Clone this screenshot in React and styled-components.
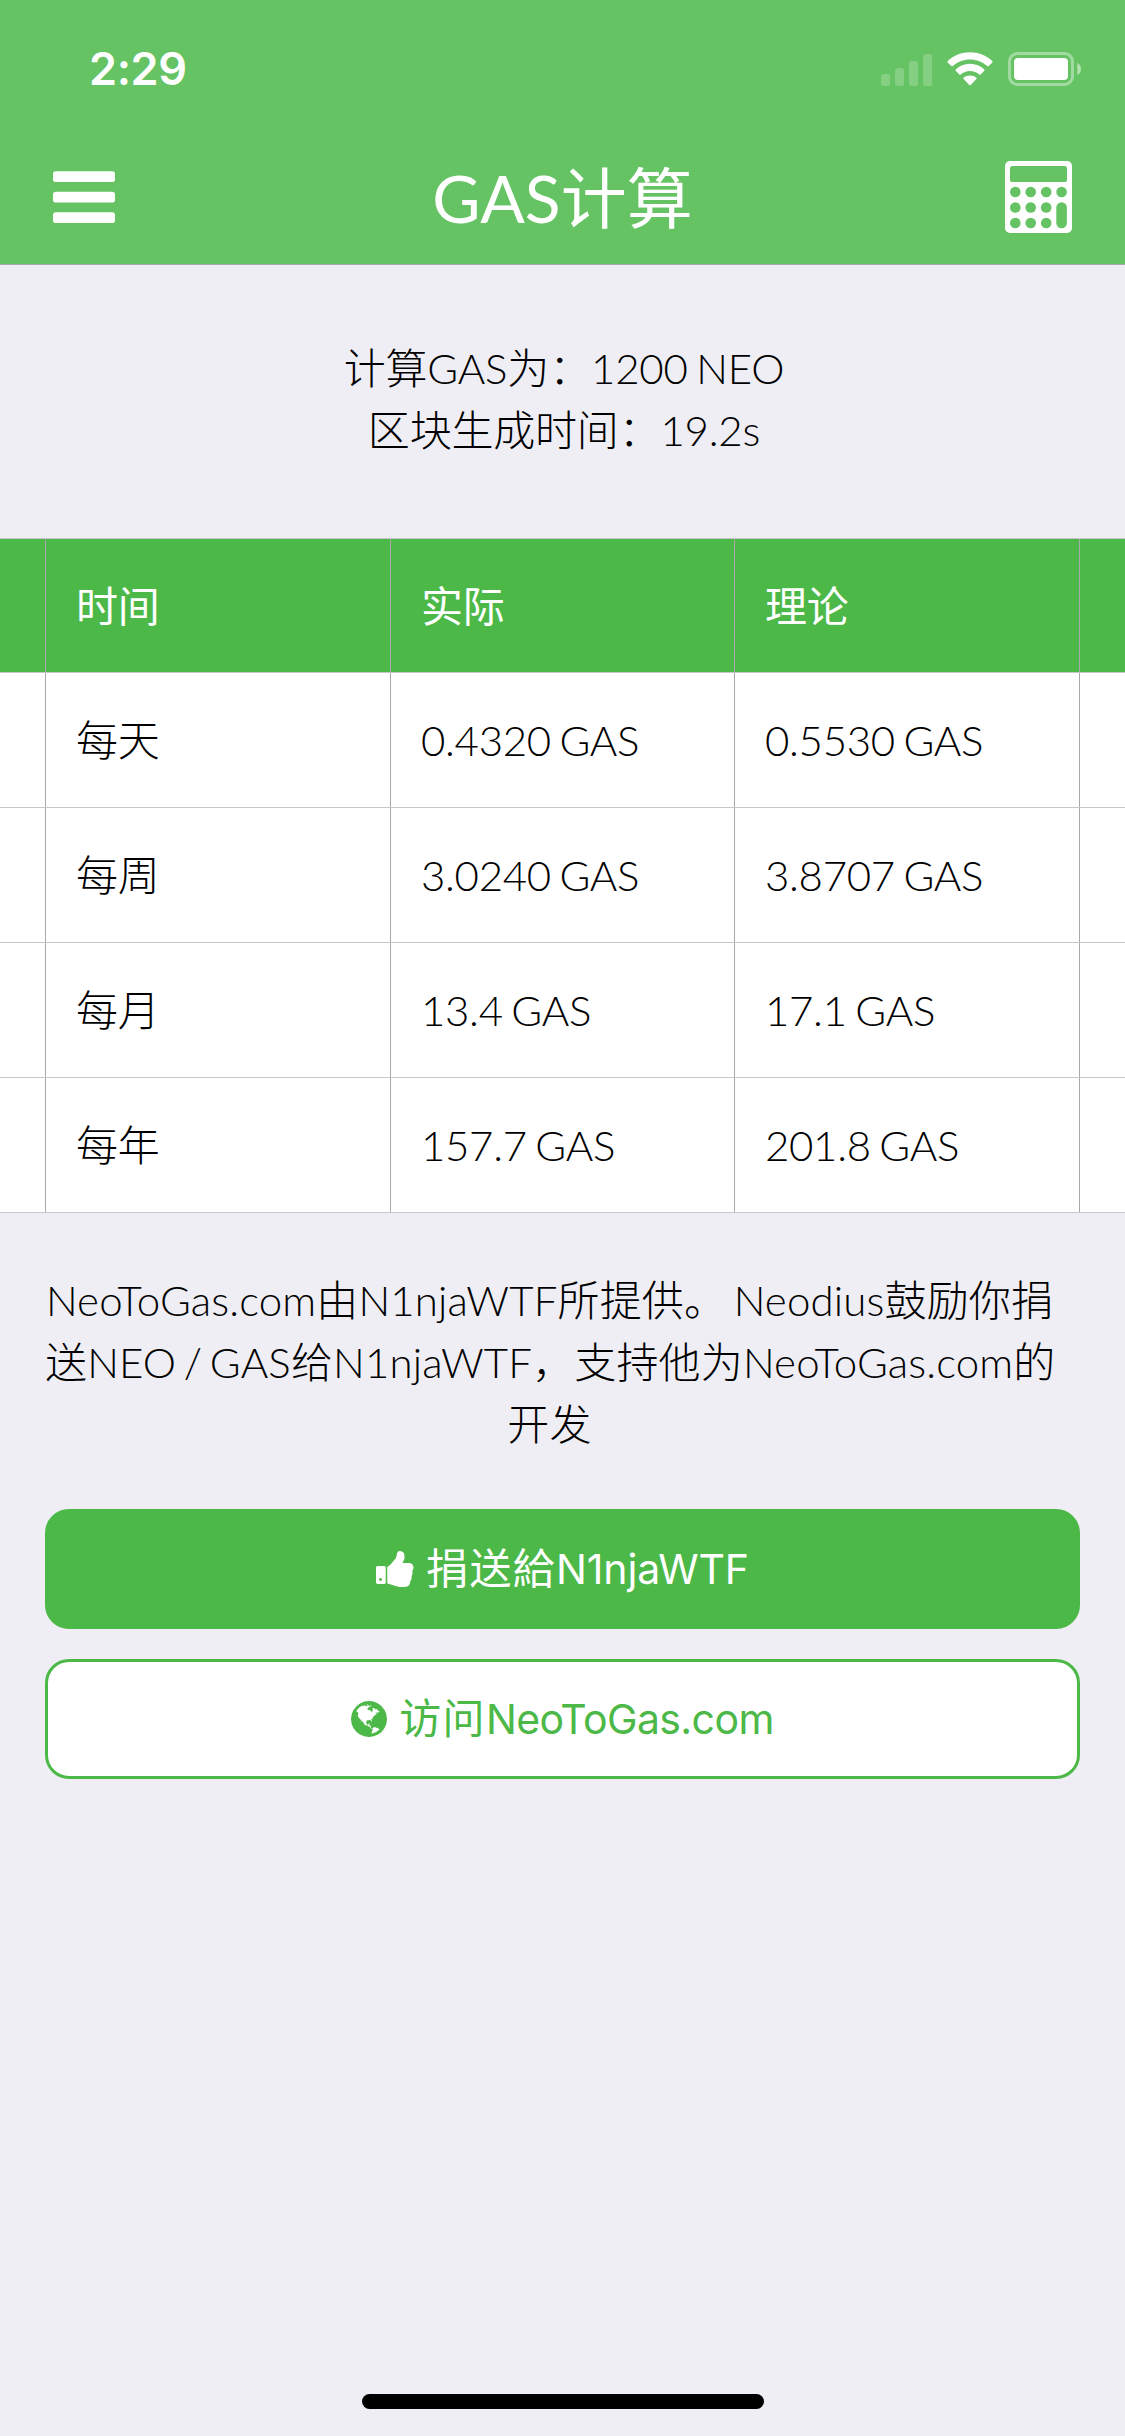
import React from "react";
import styled, { createGlobalStyle } from "styled-components";

const GREEN = "#4bb847";

const GlobalStyle = createGlobalStyle`
  *, *::before, *::after { box-sizing: border-box; }
  body { margin: 0; background: #efeef4; }
`;

const Screen = styled.div`
  display: flex;
  flex-direction: column;
  width: 1125px;
  height: 2436px;
  overflow: hidden;
  background: #efeef4;
  color: #000;
  font-family: Lato, "Noto Sans CJK SC", sans-serif;
  font-size: 42px;
  font-weight: 300;
  line-height: 62px;
`;

const Header = styled.header`
  display: flex;
  flex-direction: column;
  height: 265px;
  flex: none;
  background: #65c363;
  border-bottom: 1px solid #a7a7aa;
  color: #fff;
`;

const StatusBar = styled.div`
  display: flex;
  align-items: center;
  justify-content: space-between;
  height: 132px;
  padding: 6px 44px 0 89px;
`;

const Clock = styled.span`
  font-family: Inter, sans-serif;
  font-size: 45px;
  font-weight: 600;
  line-height: 60px;
  letter-spacing: -0.4px;
`;

const StatusIcons = styled.div`
  display: flex;
  align-items: center;
  gap: 15px;
`;

const NavBar = styled.div`
  display: grid;
  grid-template-columns: 160px 1fr 160px;
  align-items: center;
  height: 130px;
  padding: 0 53px;
`;

const NavTitle = styled.h1`
  margin: 0;
  padding-top: 2px;
  text-align: center;
  font-size: 66px;
  font-weight: 400;
  line-height: 80px;
`;

const NavAction = styled.div`
  display: flex;
  justify-content: ${(p) => (p.$end ? "flex-end" : "flex-start")};
`;

const Summary = styled.section`
  height: 273px;
  flex: none;
  padding: 72px 0 0 3px;
  text-align: center;
  letter-spacing: -0.2px;
  word-spacing: -2.5px;
`;

const Line = styled.div`
  white-space: nowrap;
`;

const Table = styled.section`
  flex: none;
  border-top: 1px solid #c8c7cc;
`;

const Row = styled.div`
  display: grid;
  grid-template-columns: 45px 345px 344px 345px 1fr;
  height: ${(p) => (p.$head ? 134 : 135)}px;
  background: ${(p) => (p.$head ? GREEN : "#fff")};
  color: ${(p) => (p.$head ? "#fff" : "#000")};
  font-weight: ${(p) => (p.$head ? 400 : 300)};
  border-bottom: 1px solid #c8c7cc;
`;

const Cell = styled.div`
  display: flex;
  align-items: center;
  padding-left: 30px;
  border-left: 1px solid #a9a9ab;
  letter-spacing: -0.3px;
  word-spacing: -2.5px;
`;

const Credits = styled.section`
  height: 296px;
  flex: none;
  padding: 56px 71px 0 45px;
  text-align: center;
  letter-spacing: 0.15px;
  word-spacing: -4px;
`;

const Actions = styled.section`
  display: flex;
  flex-direction: column;
  gap: 30px;
  padding: 0 45px;
`;

const Button = styled.button`
  display: flex;
  align-items: center;
  justify-content: center;
  height: 120px;
  padding: 0;
  border: 3px solid ${GREEN};
  border-radius: 24px;
  background: ${(p) => (p.$outline ? "#fff" : GREEN)};
  color: ${(p) => (p.$outline ? GREEN : "#fff")};
  font-family: Inter, "Noto Sans CJK SC", sans-serif;
  font-size: 41px;
  font-weight: 400;
  line-height: 60px;
  white-space: nowrap;
`;

const ButtonText = styled.span`
  margin-left: 12px;
  letter-spacing: ${(p) => p.$spacing || 0}px;
`;

const Cjk = styled.span`
  font-size: 42px;
  letter-spacing: 1.3px;
`;

const HomeArea = styled.footer`
  display: flex;
  justify-content: center;
  margin-top: auto;
  padding-bottom: 27px;
`;

const HomeBar = styled.div`
  width: 402px;
  height: 15px;
  border-radius: 8px;
  background: #000;
  margin-left: 1px;
`;

const SignalIcon = () => (
  <svg width="51" height="35" viewBox="0 0 51 35" fill="#fff" opacity="0.2">
    <rect x="0" y="22" width="9" height="12" rx="2.5" />
    <rect x="14" y="16" width="9" height="18" rx="2.5" />
    <rect x="28" y="9" width="9" height="25" rx="2.5" />
    <rect x="42" y="2" width="9" height="32" rx="2.5" />
  </svg>
);

const WifiIcon = () => (
  <svg width="46" height="34" viewBox="0 0 46 34" fill="#fff">
    <path d="M23 0.3C31.500 0.300 39.300 3.500 45.300 9.100Q46 9.800 45.300 10.500L41.700 14.100Q41 14.700 40.300 14.100C35.600 9.800 29.600 7.400 23 7.400S10.400 9.800 5.700 14.100Q5 14.700 4.300 14.100L0.700 10.500Q0 9.800 0.700 9.100C6.700 3.500 14.500 0.300 23 0.300Z" />
    <path d="M23 11.800C28.500 11.800 33.500 13.900 37.300 17.400Q38 18.100 37.300 18.800L33.600 22.400Q33 23 32.300 22.400C29.800 20.200 26.600 18.900 23 18.900S16.200 20.200 13.700 22.400Q13 23 12.400 22.400L8.700 18.800Q8 18.100 8.700 17.400C12.500 13.900 17.500 11.800 23 11.800Z" />
    <path d="M23 23.400C25.500 23.400 27.700 24.300 29.400 25.700Q30.100 26.400 29.400 27.100L23.700 32.900Q23 33.600 22.300 32.900L16.600 27.100Q15.900 26.400 16.600 25.700C18.300 24.300 20.500 23.400 23 23.400Z" />
  </svg>
);

const BatteryIcon = () => (
  <svg width="73" height="34" viewBox="0 0 73 34" fill="none">
    <rect x="1.500" y="1.500" width="63" height="31" rx="8" stroke="#fff" strokeOpacity="0.4" strokeWidth="3" />
    <rect x="6" y="6" width="54" height="22" rx="4" fill="#fff" />
    <path d="M69.300 11C71.500 12 73 14.300 73 17S71.500 22 69.300 23Z" fill="#fff" fillOpacity="0.5" />
  </svg>
);

const MenuIcon = () => (
  <svg width="62" height="52" viewBox="0 0 62 52" fill="#fff">
    <rect x="0" y="0.300" width="62" height="10.700" rx="2.800" />
    <rect x="0" y="20.800" width="62" height="10.700" rx="2.800" />
    <rect x="0" y="41.300" width="62" height="10.700" rx="2.800" />
  </svg>
);

const CalculatorIcon = () => (
  <svg width="67" height="72" viewBox="0 0 67 72" fill="#65c363">
    <rect width="67" height="72" rx="5" fill="#fff" />
    <rect x="5" y="5" width="57" height="16" rx="2.600" />
    {[31, 46.5, 62].map((cy) =>
      [10.3, 25.7, 41.2, 56.6].map((cx) =>
        cx > 50 && cy > 40 ? null : <circle key={`${cx}-${cy}`} cx={cx} cy={cy} r="5.300" />
      )
    )}
    <rect x="51.300" y="41.200" width="10.600" height="26.100" rx="5.300" />
  </svg>
);

const ThumbsUpIcon = () => (
  <svg width="38" height="42" viewBox="64 0 1621 1792" fill="currentColor">
    <path d="M320 1344q0-26-19-45t-45-19q-27 0-45.5 19t-18.5 45q0 27 18.5 45.5t45.5 18.5q26 0 45-18.5t19-45.5zm160-512v640q0 26-19 45t-45 19h-288q-26 0-45-19t-19-45v-640q0-26 19-45t45-19h288q26 0 45 19t19 45zm1184 0q0 86-55 149 15 44 15 76 3 76-43 137 17 56 0 117-15 57-54 94 9 112-49 181-64 76-197 78h-129q-66 0-144-15.500t-121.500-29-120.500-39.500q-123-43-158-44-26-1-45-19.500t-19-44.500v-641q0-25 18-43.500t43-20.500q24-2 76-59t101-121q68-87 101-120 18-18 31-48t17.500-48.500 13.500-60.500q7-39 12.500-61t19.500-52 34-50q19-19 45-19 46 0 82.500 10.500t60 26 40 40.500 24 45 12 50 5 45 .5 39q0 38-9.500 76t-19 60-27.500 56q-3 6-10 18t-11 22-8 24h277q78 0 135 57t57 135z" />
  </svg>
);

const GlobeIcon = () => (
  <svg width="36" height="36" viewBox="0 128 1536 1536" fill="currentColor">
    <path d="M768 128q209 0 385.5 103t279.5 279.5 103 385.5-103 385.5-279.5 279.5-385.5 103-385.5-103-279.5-279.5-103-385.5 103-385.5 279.5-279.5 385.5-103zm274 521q-2 1-9.5 9.5t-13.5 9.5q2 0 4.5-5t5-11 3.5-7q6-7 22-15 14-6 52-12 34-8 51 11-2-2 9.5-13t14.5-12q3-2 15-4.5t15-7.5l2-22q-12 1-17.5-7t-6.5-21q0 2-6 8 0-7-4.5-8t-11.5 1-9 1q-10-3-15-7.5t-8-16.500-4-15q-2-5-9.5-11t-9.5-10q-1-2-2.5-5.5t-3-6.5-4-5.5-5.5-2.5-7 5-7.5 10-4.5 5q-3-2-6-1.5t-4.5 1-4.5 3-5 3.5q-3 2-8.5 3t-8.5 2q15-5-1-11-10-4-16-3 9-4 7.5-12t-8.5-14h5q-1-4-8.5-8.5t-17.5-8.5-13-6q-8-5-34-9.5t-33-.5q-5 6-4.5 10.5t4 14 3.5 12.5q1 6-5.5 13t-6.5 12q0 7 14 15.5t10 21.5q-3 8-16 16t-16 12q-5 8-1.5 18.5t10.5 16.5q2 2 1.5 4t-3.5 4.5-5.5 4-6.5 3.5l-3 2q-11 5-20.5-6t-13.5-26q-7-25-16-30-23-8-29 1-5-13-41-26-25-9-58-4 6-1 0-15-7-15-19-12 3-6 4-17.5t1-13.5q3-13 12-23 1-1 7-8.5t9.5-13.5.5-6q35 4 50-11 5-5 11.5-17t10.5-17q9-6 14-5.5t14.5 5.5 14.5 5q14 1 15.5-11t-7.5-20q12 1 3-17-4-7-8-9-12-4-27 5-8 4 2 8-1-1-9.5 10.5t-16.5 17.5-16-5q-1-1-5.5-13.5t-9.5-13.5q-8 0-16 15 3-8-11-15t-24-8q19-12-8-27-7-4-20.5-5t-19.5 4q-5 7-5.5 11.5t5 8 10.5 5.5 11.5 4 8.5 3q14 10 8 14-2 1-8.5 3.5t-11.5 4.5-6 4q-3 4 0 14t-2 14q-5-5-9-17.5t-7-16.5q7 9-25 6l-10-1q-4 0-16 2t-20.5 1-13.5-8q-4-8 0-20 1-4 4-2-4-3-11-9.5t-10-8.5q-46 15-94 41 6 1 12-1 5-2 13-6.5t10-5.5q34-14 42-7l5-5q14 16 20 25-7-4-30-1-20 6-22 12 7 12 5 18-4-3-11.5-10t-14.5-11-15-5q-16 0-22 1-146 80-235 222 7 7 12 8 4 1 5 9t2.5 11 11.5-3q9 8 3 19 1-1 44 27 19 17 21 21 3 11-10 18-1-2-9-9t-9-4q-3 5 .5 18.5t10.5 12.5q-7 0-9.5 16t-2.5 35.5-1 23.5l2 1q-3 12 5.5 34.5t21.5 19.5q-13 3 20 43 6 8 8 9 3 2 12 7.5t15 10 10 10.5q4 5 10 22.5t14 23.5q-2 6 9.5 20t10.5 23q-1 0-2.500 1t-2.500 1q3 7 15.500 14t15.500 13q1 3 2 10t3 11 8 2q2-20-24-62-15-25-17-29-3-5-5.500-15.500t-4.500-14.500q2 0 6 1.500t8.500 3.500 7.500 4 2 3q-3 7 2 17.500t12 18.500 17 19 12 13q6 6 14 19.500t0 13.500q9 0 20 10.500t17 19.500q5 8 8 26t5 24q2 7 8.500 13.500t12.500 9.500l16 8 13 7q5 2 18.500 10.500t21.500 11.500q10 4 16 4t14.500-2.500 13.500-3.500q15-2 29 15t21 21q36 19 55 11-2 1 .5 7.500t8 15.500 9 14.500 5.500 8.500q5 6 18 15t18 15q6-4 7-9-3 8 7 20t18 10q14-3 14-32-31 15-49-18 0-1-2.500-5.500t-4-8.500-2.500-8.500 0-7.500 5-3q9 0 10-3.500t-2-12.500-4-13q-1-8-11-20t-12-15q-5 9-16 8t-16-9q0 1-1.500 5.500t-1.500 6.500q-13 0-15-1 1-3 2.500-17.500t3.500-22.500q1-4 5.500-12t7.500-14.500 4-12.500-4.500-9.500-17.500-2.500q-19 1-26 20-1 3-3 10.500t-5 11.500-9 7q-7 3-24 2t-24-5q-13-8-22.500-29t-9.500-37q0-10 2.500-26.500t3-25-5.500-24.500q3-2 9-9.500t10-10.500q2-1 4.500-1.500t4.500 0 4-1.500 3-6q-1-1-4-3-3-3-4-3 7 3 28.500-1.500t27.500 1.500q15 11 22-2 0-1-2.500-9.500t-.5-13.500q5 27 29 9 3 3 15.500 5t17.500 5q3 2 7 5.500t5.500 4.500 5-.5 8.500-6.500q10 14 12 24 11 40 19 44 7 3 11 2t4.500-9.500 0-14-1.500-12.500l-1-8v-18l-1-8q-15-3-18.500-12t1.500-18.500 15-18.500q1-1 8-3.500t15.500-6.500 12.500-8q21-19 15-35 7 0 11-9-1 0-5-3t-7.500-5-4.500-2q9-5 2-16 5-3 7.500-11t7.500-10q9 12 21 2 8-8 1-16 5-7 20.500-10.500t18.500-9.500q7 2 8-2t1-12 3-12q4-5 15-9t13-5l17-11q3-4 0-4 18 2 31-11 10-11-6-20 3-6-3-9.500t-15-5.500q3-1 11.500-.5t10.500-1.500q15-10-7-16-17-5-43 12zm-163 877q206-36 351-189-3-3-12.500-4.500t-12.500-3.500q-18-7-24-8 1-7-2.500-13t-8-9-12.500-8-11-7q-2-2-7-6t-7-5.500-7.500-4.500-8.500-2-10 1l-3 1q-3 1-5.500 2.500t-5.500 3-4 3 0 2.500q-21-17-36-22-5-1-11-5.500t-10.500-7-10-1.500-11.500 7q-5 5-6 15t-2 13q-7-5 0-17.500t2-18.500q-3-6-10.500-4.500t-12 4.500-11.500 8.500-9 6.500-8.500 5.500-8.500 7.500q-3 4-6 12t-5 11q-2-4-11.500-6.500t-9.500-5.500q2 10 4 35t5 38q7 31-12 48-27 25-29 40-4 22 12 26 0 7-8 20.500t-7 21.500q0 6 2 16z" />
  </svg>
);

const rows = [
  ["每天", "0.4320 GAS", "0.5530 GAS"],
  ["每周", "3.0240 GAS", "3.8707 GAS"],
  ["每月", "13.4 GAS", "17.1 GAS"],
  ["每年", "157.7 GAS", "201.8 GAS"],
];

const TableRow = ({ cells, head }) => (
  <Row $head={head}>
    <span />
    {cells.map((text) => (
      <Cell key={text}>{text}</Cell>
    ))}
    <Cell />
  </Row>
);

export default function App() {
  return (
    <Screen lang="zh-CN">
      <GlobalStyle />
      <Header>
        <StatusBar>
          <Clock>2:29</Clock>
          <StatusIcons>
            <SignalIcon />
            <WifiIcon />
            <BatteryIcon />
          </StatusIcons>
        </StatusBar>
        <NavBar>
          <NavAction><MenuIcon /></NavAction>
          <NavTitle>GAS计算</NavTitle>
          <NavAction $end><CalculatorIcon /></NavAction>
        </NavBar>
      </Header>
      <Summary>
        <Line>计算GAS为：1200 NEO</Line>
        <Line>区块生成时间：19.2s</Line>
      </Summary>
      <Table>
        <TableRow head cells={["时间", "实际", "理论"]} />
        {rows.map((cells) => (
          <TableRow key={cells[0]} cells={cells} />
        ))}
      </Table>
      <Credits>
        <Line>NeoToGas.com由N1njaWTF所提供。 Neodius鼓励你捐</Line>
        <Line>送NEO / GAS给N1njaWTF，支持他为NeoToGas.com的</Line>
        <Line>开发</Line>
      </Credits>
      <Actions>
        <Button>
          <ThumbsUpIcon />
          <ButtonText $spacing={-0.1}><Cjk>捐送給</Cjk>N1njaWTF</ButtonText>
        </Button>
        <Button $outline>
          <GlobeIcon />
          <ButtonText $spacing={-0.6}><Cjk>访问</Cjk>NeoToGas.com</ButtonText>
        </Button>
      </Actions>
      <HomeArea>
        <HomeBar />
      </HomeArea>
    </Screen>
  );
}
